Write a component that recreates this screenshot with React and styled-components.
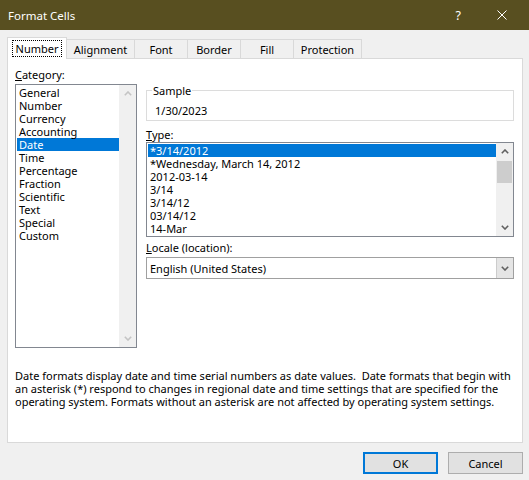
import React from 'react';
import styled, { createGlobalStyle } from 'styled-components';

const GlobalStyle = createGlobalStyle`
  html, body {
    margin: 0;
    padding: 0;
    background: #f0f0f0;
  }
  body {
    font-family: "Noto Sans", "Open Sans", sans-serif;
    font-size: 11px;
    color: #000;
  }
`;

const Dialog = styled.div`
  width: 529px;
  height: 480px;
  background: #f0f0f0;
  display: flex;
  flex-direction: column;
  overflow: hidden;
`;

const TitleBar = styled.div`
  height: 30px;
  flex: none;
  background: #584f20;
  color: #fff;
  display: flex;
  align-items: center;
  padding: 0 22px 0 8px;
`;

const Title = styled.div`
  flex: 1;
  font-size: 11.5px;
`;

const TitleControls = styled.div`
  display: flex;
  align-items: center;
  gap: 36px;
  font-size: 12.5px;
`;

const TabStrip = styled.div`
  display: flex;
  align-items: flex-end;
  height: 22px;
  margin-top: 6px;
  padding-left: 7px;
  position: relative;
  z-index: 1;
`;

const Tab = styled.div`
  box-sizing: border-box;
  width: ${p => p.$w}px;
  height: ${p => (p.$active ? 22 : 19)}px;
  margin-bottom: ${p => (p.$active ? -1 : 0)}px;
  border: 1px solid #d9d9d9;
  border-bottom: none;
  background: ${p => (p.$active ? '#fff' : '#f0f0f0')};
  display: flex;
  align-items: center;
  justify-content: center;
  line-height: 13px;
  & + & {
    margin-left: -1px;
  }
`;

const FocusLabel = styled.span`
  border: 1px dotted #000;
  padding: 1px 3px;
`;

const Panel = styled.div`
  box-sizing: border-box;
  height: 385px;
  margin: 0 6px 0 7px;
  border: 1px solid #d9d9d9;
  background: #fff;
  padding: 9px 8px 0 7px;
  display: flex;
  flex-direction: column;
`;

const TopRow = styled.div`
  display: flex;
  gap: 9px;
`;

const LeftCol = styled.div`
  width: 122px;
  display: flex;
  flex-direction: column;
`;

const RightCol = styled.div`
  width: 368px;
  display: flex;
  flex-direction: column;
  padding-top: 16px;
`;

const Label = styled.div`
  line-height: 13px;
  margin-top: ${p => p.$mt || 0}px;
  margin-bottom: ${p => p.$mb || 0}px;
`;

const ListBox = styled.div`
  box-sizing: border-box;
  height: ${p => p.$h}px;
  border: 1px solid #828790;
  display: flex;
  background: #fff;
`;

const Rows = styled.div`
  flex: 1;
  padding: 1px 0 0 1px;
`;

const Row = styled.div`
  height: 13px;
  line-height: 13px;
  padding-left: 2px;
  white-space: nowrap;
  background: ${p => (p.$selected ? '#0078d7' : 'transparent')};
  color: ${p => (p.$selected ? '#fff' : '#000')};
`;

const ScrollBar = styled.div`
  width: 17px;
  background: #f0f0f0;
  display: flex;
  flex-direction: column;
  color: ${p => (p.$disabled ? '#c4c4c4' : '#606060')};
`;

const ArrowBox = styled.div`
  height: 17px;
  display: flex;
  align-items: center;
  justify-content: center;
`;

const Track = styled.div`
  flex: 1;
`;

const Thumb = styled.div`
  height: 22px;
  margin: 1px 1px 0;
  background: #cdcdcd;
`;

const SampleGroup = styled.fieldset`
  margin: 0;
  border: 1px solid #dcdcdc;
  padding: 0 0 3px 5px;
`;

const Legend = styled.legend`
  padding: 0 1px;
  line-height: 13px;
`;

const SampleValue = styled.div`
  margin-top: 7px;
  padding-left: 3px;
  line-height: 13px;
`;

const Combo = styled.div`
  box-sizing: border-box;
  height: 22px;
  margin-top: 3px;
  border: 1px solid #a0a0a0;
  display: flex;
  align-items: stretch;
  background: #fff;
`;

const ComboText = styled.div`
  flex: 1;
  display: flex;
  align-items: center;
  padding-left: 3px;
`;

const ComboButton = styled.div`
  width: 16px;
  background: #e5e5e5;
  border-left: 1px solid #cccccc;
  display: flex;
  align-items: center;
  justify-content: center;
  color: #606060;
`;

const Description = styled.div`
  margin-top: 21px;
  line-height: 13px;
  white-space: nowrap;
`;

const ButtonRow = styled.div`
  display: flex;
  justify-content: flex-end;
  gap: 10px;
  padding-right: 6px;
  margin-top: 9px;
`;

const Button = styled.div`
  box-sizing: border-box;
  width: 75px;
  height: 22px;
  background: #e1e1e1;
  border: ${p => (p.$default ? '2px solid #0078d7' : '1px solid #adadad')};
  display: flex;
  align-items: center;
  justify-content: center;
`;

const Chevron = ({ down }) => (
  <svg width="8" height="5" viewBox="0 0 8 5">
    <polyline
      points={down ? '0.8,0.8 4,4 7.2,0.8' : '0.8,4.2 4,1 7.2,4.2'}
      fill="none"
      stroke="currentColor"
      strokeWidth="1.6"
    />
  </svg>
);

const CloseIcon = () => (
  <svg width="10" height="10" viewBox="0 0 10 10">
    <path d="M0.5 0.5 L9.5 9.5 M9.5 0.5 L0.5 9.5" stroke="#fff" strokeWidth="1" />
  </svg>
);

const Scroller = ({ disabled, thumb }) => (
  <ScrollBar $disabled={disabled}>
    <ArrowBox><Chevron /></ArrowBox>
    <Track>{thumb && <Thumb />}</Track>
    <ArrowBox><Chevron down /></ArrowBox>
  </ScrollBar>
);

const tabs = [
  { name: 'Number', w: 60 },
  { name: 'Alignment', w: 69 },
  { name: 'Font', w: 54 },
  { name: 'Border', w: 54 },
  { name: 'Fill', w: 54 },
  { name: 'Protection', w: 69 },
];

const categories = [
  'General', 'Number', 'Currency', 'Accounting', 'Date', 'Time',
  'Percentage', 'Fraction', 'Scientific', 'Text', 'Special', 'Custom',
];

const types = [
  '*3/14/2012',
  '*Wednesday, March 14, 2012',
  '2012-03-14',
  '3/14',
  '3/14/12',
  '03/14/12',
  '14-Mar',
];

export default function App() {
  return (
    <Dialog>
      <GlobalStyle />
      <TitleBar>
        <Title>Format Cells</Title>
        <TitleControls>
          <span>?</span>
          <CloseIcon />
        </TitleControls>
      </TitleBar>

      <TabStrip>
        {tabs.map((t, i) => (
          <Tab key={t.name} $w={t.w} $active={i === 0}>
            {i === 0 ? <FocusLabel>{t.name}</FocusLabel> : t.name}
          </Tab>
        ))}
      </TabStrip>

      <Panel>
        <TopRow>
          <LeftCol>
            <Label $mb={3}><u>C</u>ategory:</Label>
            <ListBox $h={264}>
              <Rows>
                {categories.map(c => (
                  <Row key={c} $selected={c === 'Date'}>{c}</Row>
                ))}
              </Rows>
              <Scroller disabled />
            </ListBox>
          </LeftCol>

          <RightCol>
            <SampleGroup>
              <Legend>Sample</Legend>
              <SampleValue>1/30/2023</SampleValue>
            </SampleGroup>

            <Label $mt={7} $mb={1}><u>T</u>ype:</Label>
            <ListBox $h={95}>
              <Rows>
                {types.map((t, i) => (
                  <Row key={t} $selected={i === 0}>{t}</Row>
                ))}
              </Rows>
              <Scroller thumb />
            </ListBox>

            <Label $mt={4}><u>L</u>ocale (location):</Label>
            <Combo>
              <ComboText>English (United States)</ComboText>
              <ComboButton><Chevron down /></ComboButton>
            </Combo>
          </RightCol>
        </TopRow>

        <Description>
          Date formats display date and time serial numbers as date values.&nbsp; Date formats that begin with<br />
          an asterisk (*) respond to changes in regional date and time settings that are specified for the<br />
          operating system. Formats without an asterisk are not affected by operating system settings.
        </Description>
      </Panel>

      <ButtonRow>
        <Button $default>OK</Button>
        <Button>Cancel</Button>
      </ButtonRow>
    </Dialog>
  );
}
